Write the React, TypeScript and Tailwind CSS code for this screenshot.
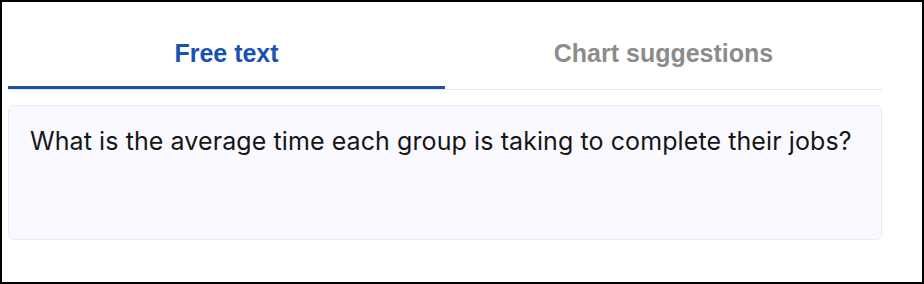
import { useState } from 'react'

const tabs = ['Free text', 'Chart suggestions']

export default function App() {
  const [active, setActive] = useState(0)

  return (
    <div className="w-[924px] h-[284px] border-2 border-black bg-white pl-[6px] pr-[40px]">
      <div className="flex border-b border-[#e8e8e8]">
        {tabs.map((t, i) => (
          <button
            key={t}
            onClick={() => setActive(i)}
            className={
              i === active
                ? 'flex-1 pt-[36px] pb-[18px] leading-[30px] text-[25px] font-bold text-[#1a52b2] border-b-[3px] border-[#1a52b2] font-["Liberation_Sans",Arial,sans-serif]'
                : 'flex-1 pt-[36px] pb-[18px] leading-[30px] text-[25px] font-bold text-[#8c8c8c] border-b-[3px] border-transparent font-["Liberation_Sans",Arial,sans-serif]'
            }
          >
            {t}
          </button>
        ))}
      </div>
      <div className="mt-[15px] h-[135px] rounded-md border border-[#ece9f8] bg-[#faf9ff] px-[21px] pt-[17px] text-[25px] leading-[36px] tracking-[0.09px] text-[#161616] font-[family-name:Inter,sans-serif]">
        What is the average time each group is taking to complete their jobs?
      </div>
    </div>
  )
}
